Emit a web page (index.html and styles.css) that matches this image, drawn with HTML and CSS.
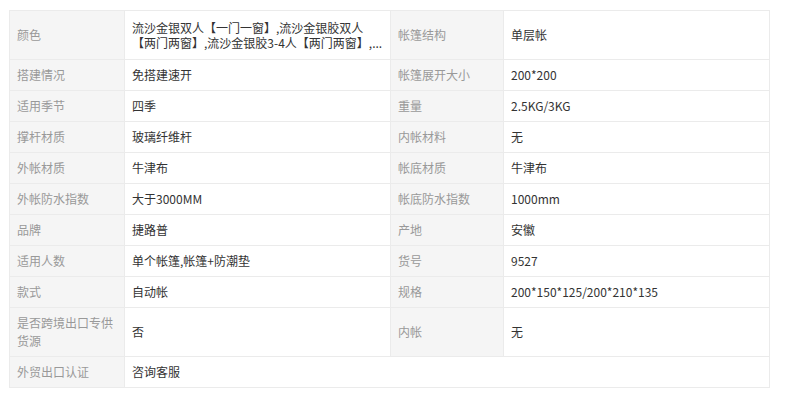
FILE: index.html
```html
<!DOCTYPE html>
<html lang="zh-CN">
<head>
<meta charset="utf-8">
<title>商品参数</title>
<link rel="stylesheet" href="styles.css">
</head>
<body>
<table class="spec">
  <colgroup>
    <col class="c-label">
    <col class="c-value">
    <col class="c-label2">
    <col class="c-value2">
  </colgroup>
  <tbody>
    <tr class="tall">
      <td class="label">颜色</td>
      <td class="value"><div class="clamp">流沙金银双人【一门一窗】,流沙金银胶双人【两门两窗】,流沙金银胶3-4人【两门两窗】,...</div></td>
      <td class="label">帐篷结构</td>
      <td class="value">单层帐</td>
    </tr>
    <tr>
      <td class="label">搭建情况</td>
      <td class="value">免搭建速开</td>
      <td class="label">帐篷展开大小</td>
      <td class="value">200*200</td>
    </tr>
    <tr>
      <td class="label">适用季节</td>
      <td class="value">四季</td>
      <td class="label">重量</td>
      <td class="value">2.5KG/3KG</td>
    </tr>
    <tr>
      <td class="label">撑杆材质</td>
      <td class="value">玻璃纤维杆</td>
      <td class="label">内帐材料</td>
      <td class="value">无</td>
    </tr>
    <tr>
      <td class="label">外帐材质</td>
      <td class="value">牛津布</td>
      <td class="label">帐底材质</td>
      <td class="value">牛津布</td>
    </tr>
    <tr>
      <td class="label">外帐防水指数</td>
      <td class="value">大于3000MM</td>
      <td class="label">帐底防水指数</td>
      <td class="value">1000mm</td>
    </tr>
    <tr>
      <td class="label">品牌</td>
      <td class="value">捷路普</td>
      <td class="label">产地</td>
      <td class="value">安徽</td>
    </tr>
    <tr>
      <td class="label">适用人数</td>
      <td class="value">单个帐篷,帐篷+防潮垫</td>
      <td class="label">货号</td>
      <td class="value">9527</td>
    </tr>
    <tr>
      <td class="label">款式</td>
      <td class="value">自动帐</td>
      <td class="label">规格</td>
      <td class="value">200*150*125/200*210*135</td>
    </tr>
    <tr class="tall">
      <td class="label">是否跨境出口专供货源</td>
      <td class="value">否</td>
      <td class="label">内帐</td>
      <td class="value">无</td>
    </tr>
    <tr>
      <td class="label">外贸出口认证</td>
      <td class="value" colspan="3">咨询客服</td>
    </tr>
  </tbody>
</table>
</body>
</html>
```

FILE: styles.css
```css
html, body {
  margin: 0;
  padding: 0;
  background: #ffffff;
}

body {
  font-family: "Noto Sans CJK SC", "Noto Sans", sans-serif;
  font-size: 12px;
}

.spec {
  margin: 10px 0 0 9px;
  width: 760px;
  border-collapse: collapse;
  table-layout: fixed;
}

.c-label { width: 115px; }
.c-value { width: 266px; }
.c-label2 { width: 113px; }
.c-value2 { width: 266px; }

.spec td {
  border: 1px solid #ebebeb;
  padding: 6px 7px;
  line-height: 18px;
  height: 18px;
  vertical-align: middle;
  word-break: break-all;
}

.spec tr.tall td {
  height: 36px;
}

.spec td.label {
  background: #f5f5f5;
  color: #999999;
}

.spec td.value {
  background: #ffffff;
  color: #333333;
}

.clamp {
  line-height: 15px;
}
```
